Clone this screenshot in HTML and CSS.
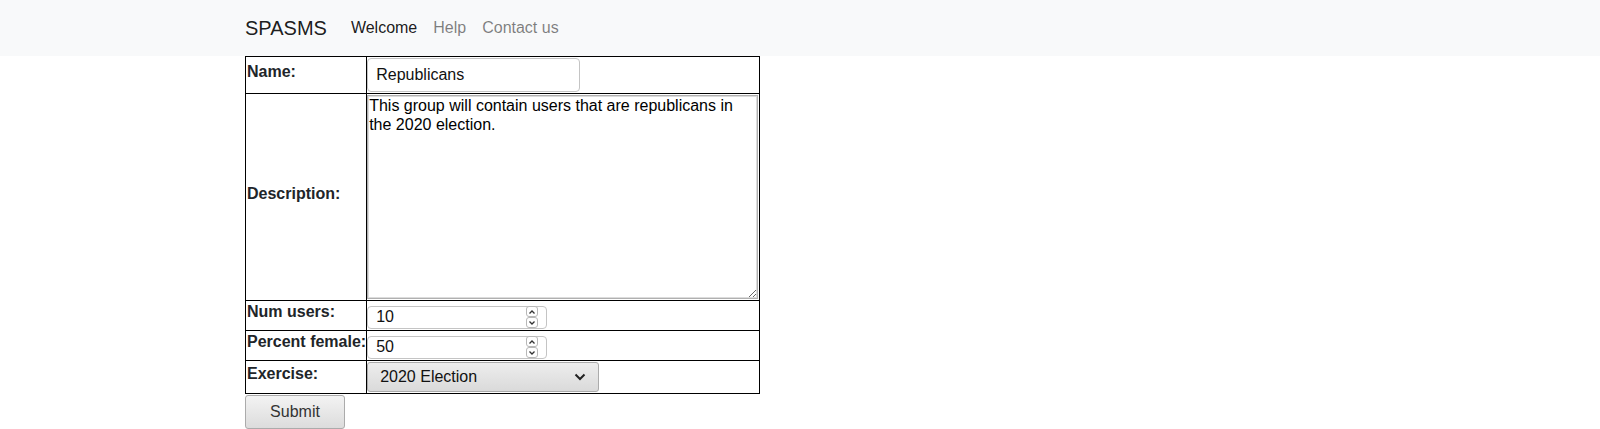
FILE: index.html
```html
<!DOCTYPE html>
<html lang="en">
<head>
<meta charset="utf-8">
<title>SPASMS</title>
<link rel="stylesheet" href="styles.css">
</head>
<body>
<nav class="navbar">
  <div class="container nav-inner">
    <a class="brand" href="#">SPASMS</a>
    <ul class="nav">
      <li><a class="nav-link active" href="#">Welcome</a></li>
      <li><a class="nav-link" href="#">Help</a></li>
      <li><a class="nav-link" href="#">Contact us</a></li>
    </ul>
  </div>
</nav>
<main class="container">
  <form class="group-form">
    <table class="form-table">
      <tr class="row-name">
        <td class="label-cell"><label>Name:</label></td>
        <td class="field-cell"><input class="text-input" type="text" value="Republicans"></td>
      </tr>
      <tr>
        <td class="label-cell"><label>Description:</label></td>
        <td class="field-cell"><textarea class="desc">This group will contain users that are republicans in the 2020 election.</textarea></td>
      </tr>
      <tr>
        <td class="label-cell"><label>Num users:</label></td>
        <td class="field-cell">
          <span class="num">
            <input class="num-input" type="text" value="10">
            <span class="spin">
              <span class="spin-btn"><svg viewBox="0 0 8 6" width="8" height="6"><path d="M1.5 4.5 L4 2 L6.5 4.5" fill="none" stroke="#333" stroke-width="1.3"/></svg></span>
              <span class="spin-btn"><svg viewBox="0 0 8 6" width="8" height="6"><path d="M1.5 1.5 L4 4 L6.5 1.5" fill="none" stroke="#333" stroke-width="1.3"/></svg></span>
            </span>
          </span>
        </td>
      </tr>
      <tr>
        <td class="label-cell"><label>Percent female:</label></td>
        <td class="field-cell">
          <span class="num">
            <input class="num-input" type="text" value="50">
            <span class="spin">
              <span class="spin-btn"><svg viewBox="0 0 8 6" width="8" height="6"><path d="M1.5 4.5 L4 2 L6.5 4.5" fill="none" stroke="#333" stroke-width="1.3"/></svg></span>
              <span class="spin-btn"><svg viewBox="0 0 8 6" width="8" height="6"><path d="M1.5 1.5 L4 4 L6.5 1.5" fill="none" stroke="#333" stroke-width="1.3"/></svg></span>
            </span>
          </span>
        </td>
      </tr>
      <tr>
        <td class="label-cell"><label>Exercise:</label></td>
        <td class="field-cell">
          <span class="select">
            <span class="select-text">2020 Election</span>
            <svg class="chev" viewBox="0 0 12 8" width="12" height="8"><path d="M1.5 1.5 L6 6 L10.5 1.5" fill="none" stroke="#222" stroke-width="2"/></svg>
          </span>
        </td>
      </tr>
    </table>
    <button class="submit" type="button">Submit</button>
  </form>
</main>
</body>
</html>
```

FILE: styles.css
```css
html, body {
  margin: 0;
  padding: 0;
}
body {
  font-family: "Liberation Sans", Arial, sans-serif;
  font-size: 16px;
  color: #212529;
  background: #fff;
}
.container {
  box-sizing: border-box;
  max-width: 1140px;
  margin: 0 auto;
  padding: 0 15px;
}
.navbar {
  background: #f8f9fa;
  padding: 8px 16px;
}
.nav-inner {
  display: flex;
  align-items: center;
  height: 40px;
}
.brand {
  font-size: 20px;
  line-height: 30px;
  color: rgba(0,0,0,.9);
  text-decoration: none;
  margin-right: 16px;
}
.nav {
  display: flex;
  list-style: none;
  margin: 0;
  padding: 0;
}
.nav-link {
  display: block;
  padding: 8px 8px;
  line-height: 24px;
  color: rgba(0,0,0,.5);
  text-decoration: none;
}
.nav-link.active {
  color: rgba(0,0,0,.9);
}
.form-table {
  border-collapse: collapse;
  font-size: 16px;
}
.form-table td {
  border: 1px solid #000;
  vertical-align: middle;
}
.form-table .label-cell {
  padding: 1px 0 1px 1px;
}
.form-table .field-cell {
  padding: 1px 1px 1px 0;
}
.label-cell label {
  display: inline-block;
  font-weight: bold;
  margin-bottom: 8px;
  line-height: 19px;
}
.text-input {
  box-sizing: border-box;
  width: 213px;
  height: 34px;
  border: 1px solid #c4c4c4;
  border-radius: 4px;
  padding: 0 8px;
  font: 16px "Liberation Sans", Arial, sans-serif;
  color: #111;
  display: block;
}
.desc {
  box-sizing: border-box;
  display: block;
  width: 391px;
  height: 204px;
  margin: 0;
  border: 1px solid #b0b0b0;
  box-shadow: inset 0 0 0 1px #dcdcdc;
  padding: 0 1px;
  font: 16px/19px "Liberation Sans", Arial, sans-serif;
  color: #000;
  resize: both;
}
.num {
  display: inline-flex;
  align-items: center;
  box-sizing: border-box;
  width: 180px;
  height: 23px;
  border: 1px solid #c4c4c4;
  border-radius: 4px;
  margin-top: 3px;
}
.num-input {
  border: 0;
  outline: 0;
  width: 150px;
  padding: 0 0 0 8px;
  font: 16px "Liberation Sans", Arial, sans-serif;
  color: #111;
  background: transparent;
}
.spin {
  display: flex;
  flex-direction: column;
  margin-left: auto;
  margin-right: 9px;
}
.spin-btn {
  box-sizing: border-box;
  width: 12px;
  height: 11px;
  border: 1px solid #b8b8b8;
  border-radius: 3px;
  display: flex;
  align-items: center;
  justify-content: center;
  background: #fff;
}
.select {
  box-sizing: border-box;
  display: flex;
  align-items: center;
  width: 232px;
  height: 30px;
  border: 1px solid #ababab;
  border-radius: 3px;
  background: linear-gradient(#ededed, #dadada);
  padding: 0 12px 0 12px;
  color: #111;
}
.chev {
  margin-left: auto;
}
.submit {
  box-sizing: border-box;
  display: block;
  width: 100px;
  height: 34px;
  margin-top: 1px;
  border: 1px solid #ababab;
  border-radius: 3px;
  background: linear-gradient(#f3f3f3, #dcdcdc);
  font: 16px "Liberation Sans", Arial, sans-serif;
  color: #333;
  padding: 0;
}
```
